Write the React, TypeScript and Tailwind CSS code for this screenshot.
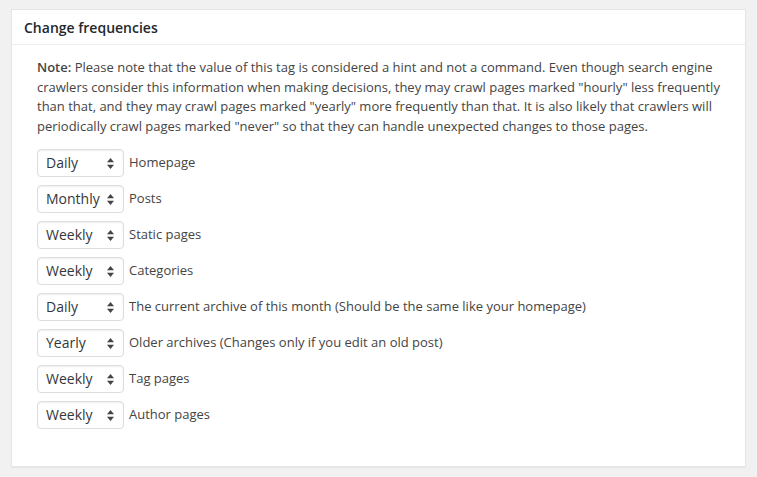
import { useState } from "react"

const FONT = { fontFamily: '"Open Sans", "Noto Sans", sans-serif' }

const OPTIONS = ["Always", "Hourly", "Daily", "Weekly", "Monthly", "Yearly", "Never"]

const ROWS: { value: string; label: string }[] = [
  { value: "Daily", label: "Homepage" },
  { value: "Monthly", label: "Posts" },
  { value: "Weekly", label: "Static pages" },
  { value: "Weekly", label: "Categories" },
  { value: "Daily", label: "The current archive of this month (Should be the same like your homepage)" },
  { value: "Yearly", label: "Older archives (Changes only if you edit an old post)" },
  { value: "Weekly", label: "Tag pages" },
  { value: "Weekly", label: "Author pages" },
]

function FreqSelect({ initial }: { initial: string }) {
  const [value, setValue] = useState(initial)
  return (
    <div className="relative h-[28px] w-[87px] shrink-0">
      <select
        value={value}
        onChange={(e) => setValue(e.target.value)}
        className="h-full w-full appearance-none rounded-[4px] border border-[#dddddd] bg-white pl-[8px] pr-[20px] text-[14px] text-[#32373c] shadow-[inset_0_1px_2px_rgba(0,0,0,0.07)] outline-none"
        style={FONT}
      >
        {OPTIONS.map((o) => (
          <option key={o} value={o}>
            {o}
          </option>
        ))}
      </select>
      <svg
        className="pointer-events-none absolute right-[10px] top-[9px]"
        width="7"
        height="11"
        viewBox="0 0 7 11"
      >
        <path d="M3.5 0 L7 4.2 L0 4.2 Z" fill="#444" />
        <path d="M0 6.8 L7 6.8 L3.5 11 Z" fill="#444" />
      </svg>
    </div>
  )
}

export default function App() {
  return (
    <div className="min-h-[477px] bg-[#f1f1f1] px-[11px] pb-[11px] pt-[9px]" style={FONT}>
      <div className="border border-[#e5e5e5] bg-white shadow-[0_1px_1px_rgba(0,0,0,0.04)]">
        <div className="flex h-[35px] items-center border-b border-[#eeeeee] px-[12px]">
          <h2 className="text-[14px] font-semibold text-[#23282d]">Change frequencies</h2>
        </div>
        <div className="px-[25px] pb-[37px] pt-[13px] text-[13px] leading-[19.5px] text-[#444444]">
          <p className="mb-[13px]">
            <b className="font-semibold">Note:</b> Please note that the value of this tag is considered a hint and not a
            command. Even though search engine crawlers consider this information when making decisions, they may crawl
            pages marked "hourly" less frequently than that, and they may crawl pages marked "yearly" more frequently
            than that. It is also likely that crawlers will periodically crawl pages marked "never" so that they can
            handle unexpected changes to those pages.
          </p>
          <div className="flex flex-col gap-[8px]">
            {ROWS.map((r, i) => (
              <div key={i} className="flex items-center gap-[5px]">
                <FreqSelect initial={r.value} />
                <span>{r.label}</span>
              </div>
            ))}
          </div>
        </div>
      </div>
    </div>
  )
}
